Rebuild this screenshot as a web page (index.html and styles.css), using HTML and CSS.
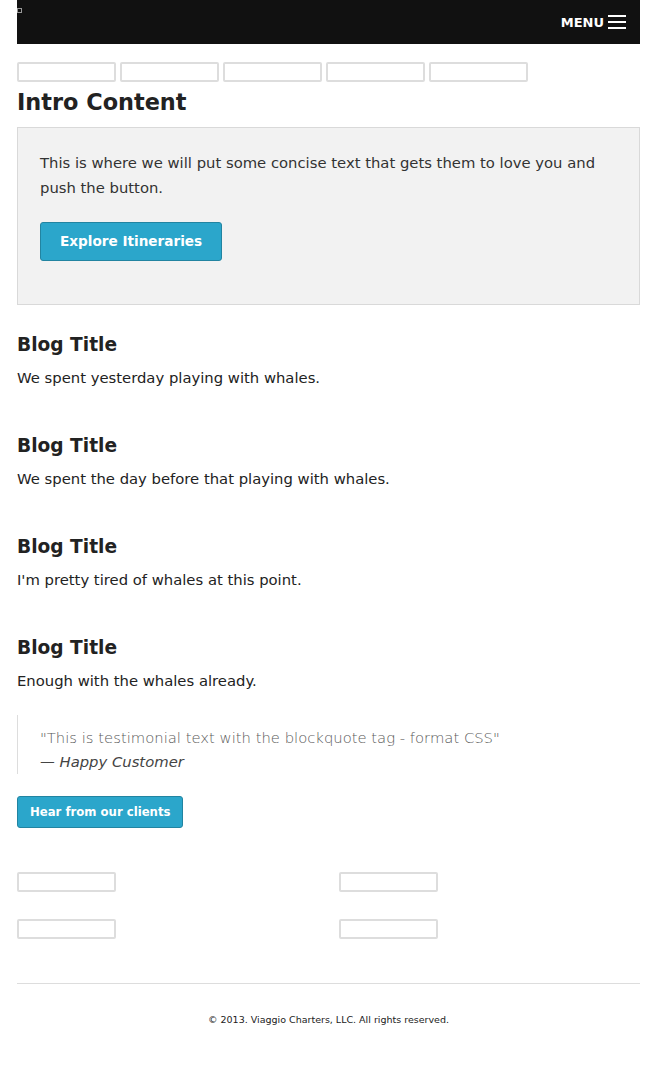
FILE: index.html
```html
<!DOCTYPE html>
<html lang="en">
<head>
    <meta charset="UTF-8">
    <meta name="viewport" content="width=device-width, initial-scale=1.0">
    <title>Viaggio Charters</title>
    <link rel="stylesheet" href="styles.css">
</head>
<body>
    <div class="page">
        <nav class="top-bar">
            <span class="brand-img"></span>
            <a class="menu-toggle" href="#">MENU
                <svg class="menu-icon" width="18" height="14" viewBox="0 0 18 14">
                    <rect x="0" y="0" width="18" height="2" fill="#fff"/>
                    <rect x="0" y="6" width="18" height="2" fill="#fff"/>
                    <rect x="0" y="12" width="18" height="2" fill="#fff"/>
                </svg>
            </a>
        </nav>

        <div class="thumbs">
            <span class="thumb"></span>
            <span class="thumb"></span>
            <span class="thumb"></span>
            <span class="thumb"></span>
            <span class="thumb"></span>
        </div>

        <h2 class="intro-title">Intro Content</h2>
        <div class="panel">
            <p>This is where we will put some concise text that gets them to love you and push the button.</p>
            <a class="button" href="#">Explore Itineraries</a>
        </div>

        <article class="post">
            <h3>Blog Title</h3>
            <p>We spent yesterday playing with whales.</p>
        </article>
        <article class="post">
            <h3>Blog Title</h3>
            <p>We spent the day before that playing with whales.</p>
        </article>
        <article class="post">
            <h3>Blog Title</h3>
            <p>I'm pretty tired of whales at this point.</p>
        </article>
        <article class="post">
            <h3>Blog Title</h3>
            <p>Enough with the whales already.</p>
        </article>

        <blockquote class="testimonial">
            <p>"This is testimonial text with the blockquote tag - format CSS"</p>
            <cite>Happy Customer</cite>
        </blockquote>
        <a class="button small" href="#">Hear from our clients</a>

        <div class="partners">
            <span class="thumb"></span>
            <span class="thumb"></span>
            <span class="thumb"></span>
            <span class="thumb"></span>
        </div>

        <hr>
        <footer class="footer">
            <p>&copy; 2013. Viaggio Charters, LLC. All rights reserved.</p>
        </footer>
    </div>
</body>
</html>
```

FILE: styles.css
```css
body {
    font-family: "DejaVu Sans", sans-serif;
    font-size: 14.8px;
    color: #222;
    background-color: #fff;
    margin: 0;
}

.page {
    margin: 0 17px;
}

/* top bar */
.top-bar {
    height: 44px;
    background-color: #111;
    display: flex;
    align-items: center;
    position: relative;
    padding-right: 14px;
}

.brand-img {
    position: absolute;
    left: 0;
    top: 8px;
    width: 3px;
    height: 3px;
    border: 1px solid #999;
}

.menu-toggle {
    margin-left: auto;
    display: flex;
    align-items: center;
    gap: 4px;
    color: #fff;
    font-size: 13px;
    font-weight: bold;
    text-decoration: none;
}

.menu-icon {
    display: block;
}

/* placeholder images */
.thumb {
    display: block;
    width: 95px;
    height: 16px;
    border: 2px solid #ddd;
    border-radius: 2px;
}

.thumbs {
    display: flex;
    gap: 4px;
    margin-top: 18px;
}

/* intro */
.intro-title {
    font-size: 22.4px;
    line-height: 26px;
    margin: 7px 0 12px;
}

.panel {
    background-color: #f2f2f2;
    border: 1px solid #d9d9d9;
    padding: 22px 22px 43px;
}

.panel p {
    margin: 0 0 22px;
    line-height: 25px;
    color: #333;
}

.button {
    display: inline-block;
    background-color: #2ba6cb;
    border: 1px solid #2284a1;
    border-radius: 3px;
    color: #fff;
    font-weight: bold;
    font-size: 13.6px;
    line-height: 17px;
    padding: 10px 19px;
    text-decoration: none;
}

.button.small {
    font-size: 11.7px;
    line-height: 16px;
    padding: 7px 12px;
}

/* blog */
.post {
    margin-top: 44px;
}

.post:first-of-type {
    margin-top: 28px;
}

.post h3 {
    font-size: 18.6px;
    line-height: 24px;
    margin: 0 0 8px;
}

.post p {
    margin: 0;
    line-height: 25px;
}

/* testimonial */
.testimonial {
    margin: 22px 0;
    border-left: 1px solid #ddd;
    padding: 11px 0 0 22px;
    color: #5a5a5a;
}

.testimonial p {
    margin: 0;
    font-size: 14.8px;
    font-weight: 200;
    line-height: 24px;
}

.testimonial cite {
    display: block;
    font-size: 14.8px;
    font-weight: 200;
    line-height: 24px;
    color: #444;
}

.testimonial cite:before {
    content: "\2014\00a0";
}

/* partners */
.partners {
    display: grid;
    grid-template-columns: 322px 1fr;
    row-gap: 27px;
    margin-top: 44px;
}

hr {
    border: 0;
    border-top: 1px solid #ddd;
    margin: 44px 0 0;
}

.footer {
    text-align: center;
    padding-top: 28px;
}

.footer p {
    margin: 0;
    font-size: 9.5px;
    line-height: 16px;
}
```
